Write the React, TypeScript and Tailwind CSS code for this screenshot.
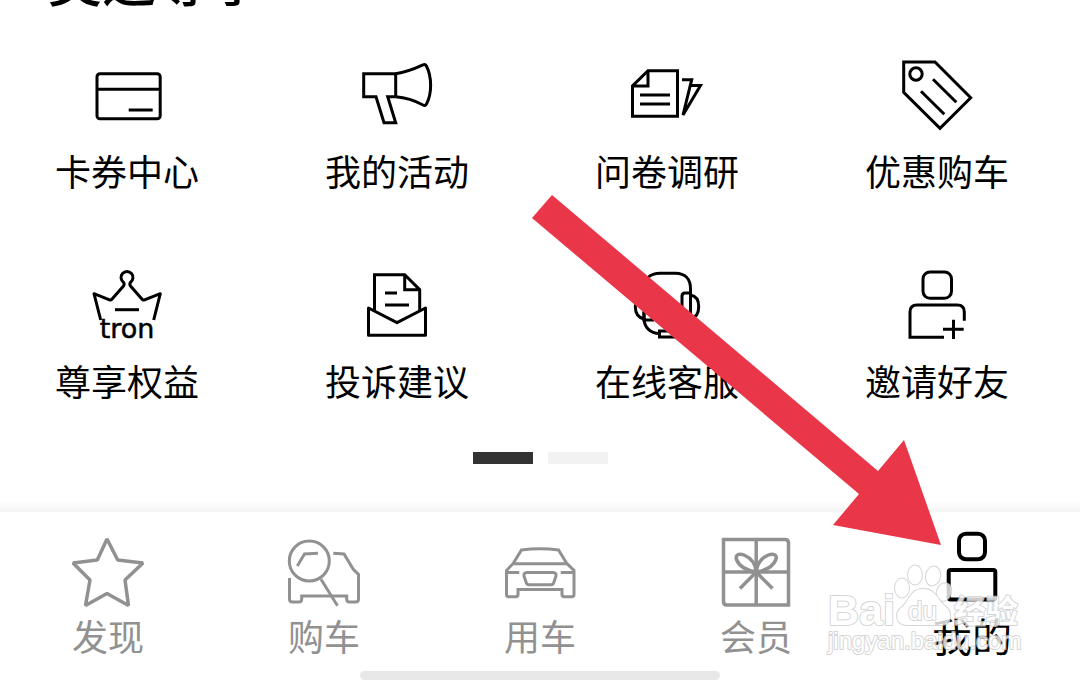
import type { ReactNode } from 'react'

interface IconProps {
  children: ReactNode
  strokeWidth?: number
}

function Icon({ children, strokeWidth = 3 }: IconProps) {
  return (
    <svg
      viewBox="0 0 72 72"
      fill="none"
      stroke="currentColor"
      strokeWidth={strokeWidth}
      className="size-[72px] shrink-0 overflow-visible"
      aria-hidden="true"
    >
      {children}
    </svg>
  )
}

const services = [
  {
    label: '卡券中心',
    icon: (
      <Icon>
        <rect x="6" y="13.8" width="63.2" height="45" rx="3" />
        <path d="M6 29.3h63M37.7 50h24" />
      </Icon>
    ),
  },
  {
    label: '我的活动',
    icon: (
      <Icon>
        <path d="M34.7 36.7V13.7H2.7v23H15l8 26h11.7l-8-26h8" />
        <path d="M34.7 13.7C46 12 55 8 62 4.800c1.500-.7 2.600-.3 3.400 1.200 5.600 11 5.600 27 .3 37.700-.8 1.700-2 2.200-3.700 1.300C54 40.500 46 37.500 34.700 36.700" />
      </Icon>
    ),
  },
  {
    label: '问卷调研',
    icon: (
      <Icon>
        <path d="M17 10.700h29.500v45.600H1.500V26zM17 10.700V26H1.500" />
        <path d="M9 35h30M9 44h30" />
        <path d="M51 19.700h9.700L52 55 69.500 25.500H59.500" />
      </Icon>
    ),
  },
  {
    label: '优惠购车',
    icon: (
      <Icon>
        <path d="M2.700 2H34l35.700 35.700L39 68.300 2.700 32.300z" />
        <circle cx="15" cy="14" r="6.200" />
        <path d="M32 19.300l23.300 23M20 31.300l23.300 23" />
      </Icon>
    ),
  },
  {
    label: '尊享权益',
    icon: (
      <Icon>
        <path
          strokeLinejoin="round"
          d="M9.700 50L3 23.700l15.500 6.200c1 .4 1.700.2 2.400-.6L32.500 16c1-1.300.9-2.300.1-3.600a6 6 0 1 1 6.800 0c-.8 1.300-.9 2.300.1 3.600l11.600 13.300c.7.8 1.400 1 2.400.6L69.300 23.700 62.700 50"
        />
        <path d="M24 39.700h24" />
        <text
          x="36"
          y="68"
          textAnchor="middle"
          fill="currentColor"
          strokeWidth="0.5"
          className="font-['DejaVu_Sans',sans-serif] text-[27px]"
        >
          tron
        </text>
      </Icon>
    ),
  },
  {
    label: '投诉建议',
    icon: (
      <Icon>
        <path d="M13.500 41V4.700h30.200l15 15V41M43.700 4.700v15h15" />
        <path d="M24 23h12M24 35h24" />
        <path strokeLinejoin="round" d="M7.500 38L36 52.700 64.500 38v27.300h-57z" />
      </Icon>
    ),
  },
  {
    label: '在线客服',
    icon: (
      <Icon>
        <path d="M13 23v-4C13 9 19 3.300 29 3.300h15.500C54 3.300 59.500 9 59.500 19v30" />
        <path d="M13 23v27h8.500V25.500c0-1.500-1-2.500-2.500-2.500zM59.500 23H54c-2 0-3 1-3 3v23h8.500" />
        <path d="M13 25C7 26 4.300 30 4.300 36.500S7 47.500 13 49M59.500 25c6 1 8.200 5 8.200 11.500S65.500 47.500 59.500 49" />
        <path d="M13 42v6c0 9 6 15.500 15.500 15.500M28.500 61h16v6h-16z" />
      </Icon>
    ),
  },
  {
    label: '邀请好友',
    icon: (
      <Icon>
        <rect x="22" y="2" width="28.500" height="26.300" rx="7" />
        <path d="M43 67.300H9V42c0-4.500 2.500-7 7-7h40.300c4.500 0 7 2.500 7 7v8.700" />
        <path d="M42 59.300h20.700M52.500 49.700V69" />
      </Icon>
    ),
  },
]

const tabs = [
  {
    label: '发现',
    icon: (
      <Icon strokeWidth={3.5}>
        <path
          strokeLinejoin="bevel"
          d="M35 2L25.300 23 1 26l17 17-4.500 25.500L35 56.500l21.500 12L53 43l18-17-25.300-3z"
        />
      </Icon>
    ),
  },
  {
    label: '购车',
    icon: (
      <Icon>
        <circle cx="21.300" cy="24" r="20" />
        <path d="M9.300 29L16.500 17l13.500-.7M33 42.300l16.500 26.400" />
        <path d="M45.300 16.300l10.700.7 9.300 15.300 5.200 5V62c0 2-1 3-3 3H61.500c-2 0-2.800-1-2.800-3v-3h-45v3c0 2-.8 3-2.800 3H4.500c-2 0-3-1-3-3V41" />
      </Icon>
    ),
  },
  {
    label: '用车',
    icon: (
      <Icon>
        <path d="M9 26.700L17.500 13q18.500-2.500 37 0L63 26.700l7 6.800v24c0 1.500-.7 2.300-2.200 2.300H60.500c-1.700 0-2.500-.8-2.500-2.300v-5H14v5c0 1.500-.8 2.300-2.500 2.300H4.700c-1.500 0-2.200-.8-2.200-2.300v-24z" />
        <path d="M9 26.700h54M3 35.500h12.300M56.700 35.500H69.500" />
        <path
          strokeLinejoin="round"
          d="M23 35.500h26c2.500 0 3.500 1.500 3 3.500l-2.200 6.500c-.5 1.500-1.200 2.200-2.800 2.200H25c-1.600 0-2.300-.7-2.800-2.200L20 39c-.5-2 .5-3.500 3-3.500z"
        />
      </Icon>
    ),
  },
  {
    label: '会员',
    icon: (
      <Icon strokeWidth={3.5}>
        <path d="M3.500 2.500H65c2.500 0 3.500 1 3.500 3.500v62H7c-2.500 0-3.500-1-3.500-3.500zM36.200 2.500V68M3.500 35h65" />
        <path d="M36.200 35C27 33.500 19 29 16.500 22.500 15 18 19 16 24 18c7 3 11.500 9 12.200 17zM36.200 35c9.200-1.500 17.200-6 19.700-12.500 1.500-4.500-2.500-6.500-7.500-4.500-7 3-11.500 9-12.200 17z" />
        <path d="M20 51.500L36.200 35l16.300 16.500" />
      </Icon>
    ),
  },
  {
    label: '我的',
    active: true,
    icon: (
      <Icon strokeWidth={4}>
        <rect x="23" y="-3.300" width="26" height="25.600" rx="7" />
        <rect x="12.700" y="33" width="46.600" height="29.500" rx="2" />
      </Icon>
    ),
  },
]

function Watermark() {
  return (
    <div
      className="pointer-events-none absolute right-[58px] bottom-[20px] h-[100px] w-[195px] font-['Liberation_Sans','Noto_Sans_CJK_SC',sans-serif] opacity-80"
      aria-hidden="true"
    >
      <svg
        viewBox="0 0 195 100"
        fill="#fff"
        stroke="#cccccc"
        strokeLinejoin="round"
        paintOrder="stroke"
        className="h-full w-full overflow-visible"
      >
        <g strokeWidth="2">
          <ellipse cx="75" cy="28" rx="7" ry="9.500" />
          <ellipse cx="88" cy="15" rx="7" ry="9.500" />
          <ellipse cx="106" cy="16" rx="7" ry="9.500" transform="rotate(12 106 16)" />
          <ellipse cx="117" cy="32" rx="7" ry="9" transform="rotate(20 117 32)" />
          <path d="M96 29c-13 0-14 13-21 18-8 6-6 18 5 18h34c11 0 12-13 4-19-7-5-9-17-22-17z" />
        </g>
        <g strokeWidth="2">
          <text x="1" y="65" className="text-[43px] font-bold">Bai</text>
          <text x="81" y="60" className="text-[26px]">du</text>
          <text x="127" y="63" className="text-[32px] font-bold">经验</text>
          <text x="1" y="89" className="text-[24px]">jingyan.baidu.com</text>
        </g>
      </svg>
    </div>
  )
}

export default function App() {
  return (
    <div className="relative overflow-hidden bg-white font-['Noto_Sans_CJK_SC',sans-serif] text-black">
      <main>
        <h1 className="-mt-12 pl-[48px] text-[54px] leading-[54px] font-medium">奥迪尊享</h1>

        <ul className="grid grid-cols-[repeat(4,144px)] justify-between gap-y-[82px] pt-[54px] pr-[71px] pl-[55px]">
          {services.map(({ label, icon }) => (
            <li key={label}>
              <button type="button" className="flex w-full flex-col items-center gap-5">
                {icon}
                <span className="text-[36px] leading-[36px] whitespace-nowrap">{label}</span>
              </button>
            </li>
          ))}
        </ul>

        <div className="mt-[54px] flex justify-center gap-[15px]">
          <button type="button" aria-label="第1页" className="h-3 w-[60px] bg-[#333333]" />
          <button type="button" aria-label="第2页" className="h-3 w-[60px] bg-[#f2f2f2]" />
        </div>
      </main>

      <div className="mt-9 h-3 bg-linear-to-b from-white to-[#f5f5f5]" />

      <nav className="flex flex-col items-center gap-[18px] bg-white pt-[25px]">
        <ul className="grid w-full grid-cols-5">
          {tabs.map(({ label, icon, active }) => (
            <li key={label}>
              <a
                href="#"
                aria-current={active ? 'page' : undefined}
                className={
                  active
                    ? 'flex flex-col items-center gap-2 text-[40px] leading-[36px] text-black'
                    : 'flex flex-col items-center gap-2 text-[36px] leading-[36px] text-[#919191]'
                }
              >
                {icon}
                <span>{label}</span>
              </a>
            </li>
          ))}
        </ul>
        <div className="h-[9px] w-1/3 rounded-full bg-[#e8e8e8]" />
      </nav>

      <svg
        viewBox="0 0 412 352"
        className="pointer-events-none absolute right-[137px] bottom-[134px] h-[352px] w-[412px]"
        aria-hidden="true"
      >
        <path fill="#ea3649" d="M21 1L347 277l26-31 37 105-108-20 26-31L1 24z" />
      </svg>

      <Watermark />
    </div>
  )
}
